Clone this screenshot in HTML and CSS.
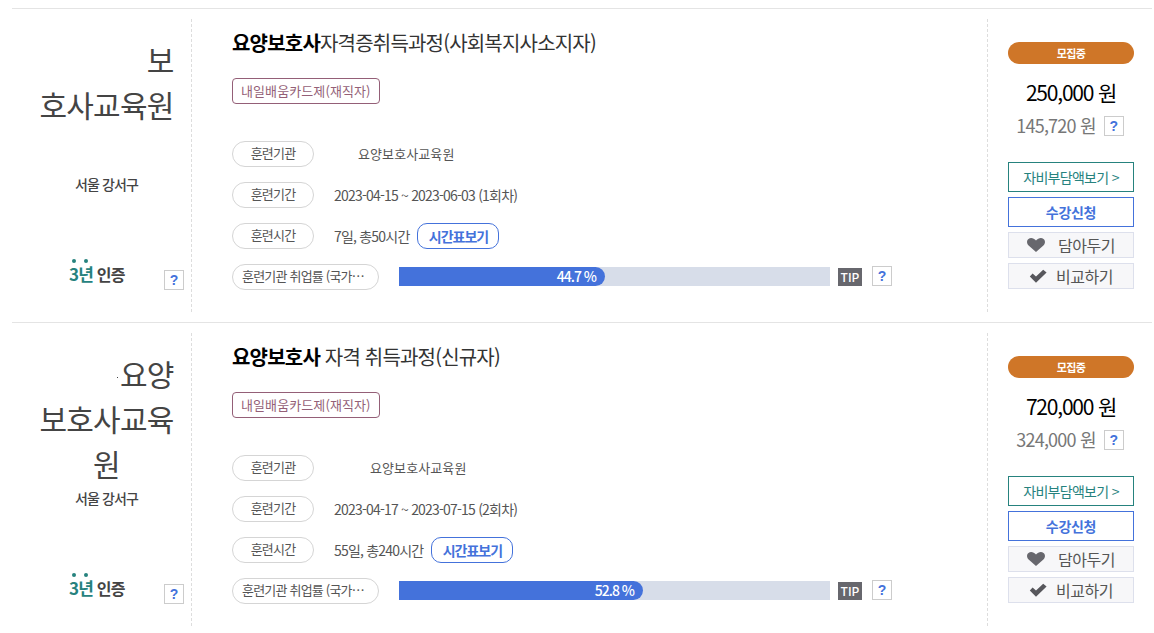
FILE: index.html
```html
<!DOCTYPE html>
<html lang="ko">
<head>
    <meta charset="UTF-8">
    <meta name="viewport" content="width=device-width, initial-scale=1.0">
    <title>훈련과정 목록</title>
    <link rel="stylesheet" href="styles.css">
</head>
<body>
    <div class="course-list">
        <div class="course">
            <div class="org-col">
                <div class="org-name">
                    <span class="org-line-right">보</span>
                    <span>호사교육원</span>
                </div>
                <div class="org-region">서울 강서구</div>
                <div class="org-cert">
                    <span class="cert-years"><span class="dot-char">3</span><span class="dot-char">년</span></span> 인증
                    <span class="help-box cert-help">?</span>
                </div>
            </div>
            <div class="info-col">
                <h3 class="course-title"><b>요양보호사</b>자격증취득과정(사회복지사소지자)</h3>
                <span class="course-tag">내일배움카드제(재직자)</span>
                <div class="info-rows">
                    <div class="info-row"><span class="info-label">훈련기관</span><span class="info-org">요양보호사교육원</span></div>
                    <div class="info-row"><span class="info-label">훈련기간</span><span class="info-value">2023-04-15 ~ 2023-06-03 (1회차)</span></div>
                    <div class="info-row"><span class="info-label">훈련시간</span><span class="info-value">7일, 총50시간</span><a class="time-btn">시간표보기</a></div>
                    <div class="info-row">
                        <span class="info-label info-label-wide">훈련기관 취업률 (국가…</span>
                        <div class="rate-bar"><div class="rate-fill" style="width: 206px">44.7 %</div></div>
                        <span class="tip-mark">TIP</span>
                        <span class="help-box">?</span>
                    </div>
                </div>
            </div>
            <div class="side-col">
                <div class="status-pill">모집중</div>
                <div class="price-main">250,000 원</div>
                <div class="price-sub"><span>145,720 원</span><span class="help-box">?</span></div>
                <a class="side-btn btn-teal">자비부담액보기 &gt;</a>
                <a class="side-btn btn-blue">수강신청</a>
                <a class="side-btn btn-grey btn-save">
                    <svg class="btn-icon" viewBox="0 0 18 14" width="18" height="14"><path d="M9 14L1.6 7.4C-.6 5.200-.3 2.200 1.500 .900 3.700-.6 6.900 0 9 2.600 11.100 0 14.300-.6 16.500 .900 18.300 2.200 18.600 5.200 16.400 7.400Z" fill="#67676d"/></svg>
                    담아두기
                </a>
                <a class="side-btn btn-grey btn-compare">
                    <svg class="btn-icon" viewBox="0 0 18 14" width="18" height="14"><path d="M.8 7.400L3.600 4.400 7 7.600 14.200 .8 17.600 3.600 7 13.800Z" fill="#57575c"/></svg>
                    비교하기
                </a>
            </div>
        </div>

        <div class="course">
            <div class="org-col">
                <div class="org-name">
                    <span class="org-line-right"><i class="org-speck"></i>요양</span>
                    <span>보호사교육</span>
                    <span>원</span>
                </div>
                <div class="org-region">서울 강서구</div>
                <div class="org-cert">
                    <span class="cert-years"><span class="dot-char">3</span><span class="dot-char">년</span></span> 인증
                    <span class="help-box cert-help">?</span>
                </div>
            </div>
            <div class="info-col">
                <h3 class="course-title"><b>요양보호사</b> 자격 취득과정(신규자)</h3>
                <span class="course-tag">내일배움카드제(재직자)</span>
                <div class="info-rows">
                    <div class="info-row"><span class="info-label">훈련기관</span><span class="info-org info-org-far">요양보호사교육원</span></div>
                    <div class="info-row"><span class="info-label">훈련기간</span><span class="info-value">2023-04-17 ~ 2023-07-15 (2회차)</span></div>
                    <div class="info-row"><span class="info-label">훈련시간</span><span class="info-value">55일, 총240시간</span><a class="time-btn">시간표보기</a></div>
                    <div class="info-row">
                        <span class="info-label info-label-wide">훈련기관 취업률 (국가…</span>
                        <div class="rate-bar"><div class="rate-fill" style="width: 244px">52.8 %</div></div>
                        <span class="tip-mark">TIP</span>
                        <span class="help-box">?</span>
                    </div>
                </div>
            </div>
            <div class="side-col">
                <div class="status-pill">모집중</div>
                <div class="price-main">720,000 원</div>
                <div class="price-sub"><span>324,000 원</span><span class="help-box">?</span></div>
                <a class="side-btn btn-teal">자비부담액보기 &gt;</a>
                <a class="side-btn btn-blue">수강신청</a>
                <a class="side-btn btn-grey btn-save">
                    <svg class="btn-icon" viewBox="0 0 18 14" width="18" height="14"><path d="M9 14L1.6 7.4C-.6 5.200-.3 2.200 1.500 .900 3.700-.6 6.900 0 9 2.600 11.100 0 14.300-.6 16.500 .900 18.300 2.200 18.600 5.200 16.400 7.400Z" fill="#67676d"/></svg>
                    담아두기
                </a>
                <a class="side-btn btn-grey btn-compare">
                    <svg class="btn-icon" viewBox="0 0 18 14" width="18" height="14"><path d="M.8 7.400L3.600 4.400 7 7.600 14.200 .8 17.600 3.600 7 13.800Z" fill="#57575c"/></svg>
                    비교하기
                </a>
            </div>
        </div>
    </div>
</body>
</html>
```

FILE: styles.css
```css
body {
    margin: 0;
    font-family: "Noto Sans CJK KR", "Noto Sans", sans-serif;
    color: #555;
    background-color: #fff;
    overflow: hidden;
}
.course-list {
    padding: 8px 2px 0 12px;
}
.course {
    display: grid;
    grid-template-columns: 180px 796px 1fr;
    height: 293px;
    padding: 10px 0;
    border-top: 1px solid #e4e4e4;
}

/* 왼쪽 기관 정보 */
.org-col {
    display: flex;
    flex-direction: column;
    align-items: center;
    border-right: 1px dashed #ddd;
    padding-left: 10px;
}
.org-name {
    width: 134px;
    height: 135px;
    padding-top: 18px;
    box-sizing: border-box;
    font-size: 30px;
    line-height: 45px;
    letter-spacing: -0.8px;
    text-align: center;
    white-space: nowrap;
    color: #444;
}
.org-name span {
    display: block;
}
.org-name .org-line-right {
    text-align: right;
}
.org-speck {
    display: inline-block;
    width: 1px;
    height: 1px;
    margin-right: 2px;
    vertical-align: middle;
    background-color: #444;
}
.org-region {
    margin-top: 20px;
    height: 20px;
    line-height: 20px;
    font-size: 14px;
    font-weight: 500;
    letter-spacing: -0.85px;
    color: #444;
}
.org-cert {
    position: relative;
    width: 100%;
    margin-top: 68px;
    height: 24px;
    line-height: 24px;
    padding-left: 47px;
    box-sizing: border-box;
    font-size: 16px;
    font-weight: 700;
    letter-spacing: -0.8px;
    color: #444;
}
.cert-years {
    font-size: 17px;
    color: #26827e;
}
.dot-char {
    position: relative;
}
.dot-char::before {
    content: "";
    position: absolute;
    top: -2px;
    left: 50%;
    margin-left: -2px;
    width: 4px;
    height: 4px;
    border-radius: 50%;
    background-color: #26827e;
}
.help-box {
    display: inline-block;
    width: 18px;
    height: 18px;
    border: 1px solid #ccc;
    line-height: 18px;
    text-align: center;
    font-family: "Liberation Sans", sans-serif;
    font-size: 14px;
    font-weight: 700;
    letter-spacing: 0;
    color: #4472db;
}
.cert-help {
    position: absolute;
    left: 142px;
    top: 8px;
}

/* 가운데 과정 정보 */
.info-col {
    padding: 10px 0 0 40px;
    border-right: 1px dashed #ddd;
}
.course-title {
    margin: 0;
    font-size: 20px;
    line-height: 28px;
    font-weight: 400;
    letter-spacing: -0.8px;
    color: #333;
}
.course-title b {
    font-weight: 700;
    color: #000;
}
.course-tag {
    display: inline-block;
    margin-top: 21px;
    height: 24px;
    line-height: 24px;
    padding: 0 8px;
    border: 1px solid #945f77;
    border-radius: 4px;
    font-size: 13px;
    letter-spacing: 0.1px;
    color: #945f77;
}
.info-rows {
    display: flex;
    flex-direction: column;
    gap: 15px;
    margin-top: 37px;
}
.info-row {
    display: flex;
    align-items: center;
    height: 26px;
}
.info-label {
    flex: none;
    width: 80px;
    height: 24px;
    line-height: 22px;
    border: 1px solid #d5d5d5;
    border-radius: 13px;
    text-align: center;
    font-size: 13px;
    letter-spacing: -0.8px;
    color: #555;
}
.info-label-wide {
    width: 136px;
    padding-left: 9px;
    text-align: left;
}
.info-value {
    margin-left: 20px;
    font-size: 14px;
    letter-spacing: -0.8px;
    color: #555;
}
.info-org {
    margin-left: 44px;
    margin-bottom: 2px;
    font-size: 13px;
    letter-spacing: 0.1px;
    color: #555;
}
.info-org-far {
    margin-left: 56px;
}
.time-btn {
    flex: none;
    width: 80px;
    height: 24px;
    margin-left: 8px;
    line-height: 24px;
    border: 1px solid #4472db;
    border-radius: 10px;
    text-align: center;
    font-size: 14px;
    font-weight: 700;
    letter-spacing: -1px;
    color: #4472db;
}
.rate-bar {
    flex: none;
    width: 431px;
    height: 19px;
    margin-left: 20px;
    margin-bottom: 1px;
    background-color: #d7dde9;
}
.rate-fill {
    height: 19px;
    line-height: 19px;
    box-sizing: border-box;
    padding-right: 9px;
    text-align: right;
    border-radius: 0 10px 10px 0;
    background-color: #4472db;
    font-size: 14px;
    font-weight: 500;
    letter-spacing: -1px;
    color: #fff;
}
.tip-mark {
    flex: none;
    width: 24px;
    height: 18px;
    line-height: 18px;
    margin-left: 8px;
    text-align: center;
    background-color: #67676d;
    font-size: 12px;
    font-weight: 500;
    color: #fff;
}
.info-row .help-box {
    margin-left: 10px;
    margin-bottom: 2px;
}

/* 오른쪽 가격, 버튼 */
.side-col {
    display: flex;
    flex-direction: column;
    padding: 23px 18px 0 20px;
}
.status-pill {
    height: 22px;
    line-height: 22px;
    border-radius: 11px;
    text-align: center;
    background-color: #cf7628;
    font-size: 11px;
    font-weight: 700;
    letter-spacing: -0.6px;
    color: #fff;
}
.price-main {
    margin-top: 13px;
    height: 30px;
    line-height: 30px;
    text-align: center;
    font-size: 21px;
    letter-spacing: -1.2px;
    color: #000;
}
.price-sub {
    display: flex;
    justify-content: center;
    align-items: center;
    gap: 8px;
    margin-top: 8px;
    margin-right: 2px;
    height: 20px;
    font-size: 18px;
    letter-spacing: -0.8px;
    color: #777;
}
.price-sub .help-box {
    margin-top: 2px;
}
.side-btn {
    display: flex;
    justify-content: center;
    align-items: center;
    box-sizing: border-box;
    text-decoration: none;
}
.btn-teal {
    height: 30px;
    margin-top: 27px;
    border: 1px solid #26827e;
    font-size: 14px;
    letter-spacing: -0.7px;
    color: #26827e;
}
.btn-blue {
    height: 30px;
    margin-top: 5px;
    border: 1px solid #4472db;
    font-size: 14px;
    font-weight: 700;
    letter-spacing: -0.3px;
    color: #4472db;
}
.btn-grey {
    height: 26px;
    margin-top: 5px;
    border: 1px solid #dde0ec;
    background-color: #f7f7f9;
    font-size: 16px;
    letter-spacing: -0.5px;
    color: #555;
}
.btn-save {
    gap: 13px;
}
.btn-compare {
    gap: 9px;
}
.btn-icon {
    flex: none;
}
```
